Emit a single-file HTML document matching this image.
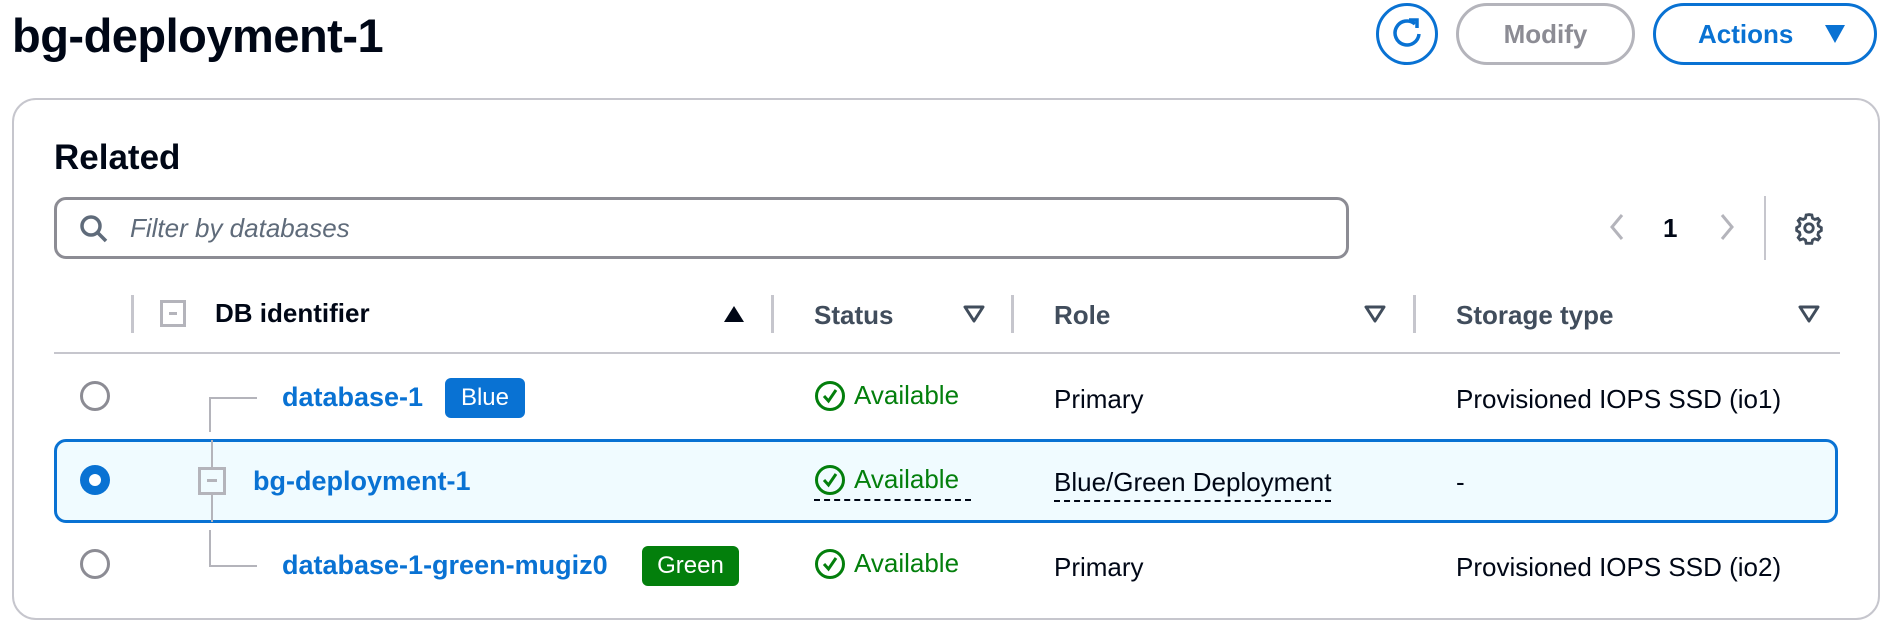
<!DOCTYPE html>
<html><head><meta charset="utf-8"><style>
*{box-sizing:border-box;margin:0;padding:0}
body{width:1894px;height:636px;background:#fff;position:relative;overflow:hidden;font-family:"Liberation Sans",sans-serif;color:#000716}
.a{position:absolute;white-space:nowrap}
.b{font-weight:bold}
.lnk{color:#0972d3;font-weight:bold;font-size:27px}
.txt{font-size:26px}
.av{color:#037f0c;font-size:26px}
.vd{position:absolute;width:3px;background:#c6c6cd}
.tri{position:absolute}
.radio{position:absolute;width:30px;height:30px;border:3px solid #8c8c94;border-radius:50%}
.tl{position:absolute;background:#b4b4bb}
.dash{border-bottom:2px dashed #000716;padding-bottom:2px}
</style></head><body>
<div class="a b" style="left:12px;top:8px;font-size:47px;letter-spacing:-0.5px">bg-deployment-1</div>

<div class="a" style="left:1376px;top:3px;width:62px;height:62px;border:3px solid #0972d3;border-radius:50%">
<svg width="56" height="56" viewBox="0 0 56 56" style="position:absolute;left:0;top:0"><path d="M36 18 A12 12 0 1 0 40 28" fill="none" stroke="#0972d3" stroke-width="3.5"/><path d="M30 14 L38 14 L38 22" fill="none" stroke="#0972d3" stroke-width="3.5"/></svg></div>
<div class="a b" style="left:1456px;top:3px;width:179px;height:62px;border:3px solid #b4b4bb;border-radius:31px;color:#8c8c94;font-size:26px;text-align:center;line-height:56px">Modify</div>
<div class="a b" style="left:1653px;top:3px;width:224px;height:62px;border:3px solid #0972d3;border-radius:31px;color:#0972d3;font-size:26px;line-height:56px;padding-left:42px">Actions<svg style="position:absolute;left:168px;top:18px" width="22" height="20"><path d="M1 1 L21 1 L11 19 Z" fill="#0972d3"/></svg></div>

<div class="a" style="left:12px;top:98px;width:1868px;height:522px;border:2px solid #c6c6cd;border-radius:24px"></div>
<div class="a b" style="left:54px;top:138px;font-size:35px">Related</div>

<div class="a" style="left:54px;top:197px;width:1295px;height:62px;border:3px solid #8c8c94;border-radius:12px"></div>
<svg class="a" style="left:78px;top:213px" width="32" height="32" viewBox="0 0 32 32"><circle cx="13" cy="13" r="9" fill="none" stroke="#5f6b7a" stroke-width="3.5"/><path d="M20 20 L28 28" stroke="#5f6b7a" stroke-width="3.5"/></svg>
<div class="a" style="left:130px;top:213px;font-size:26px;font-style:italic;color:#5f6b7a">Filter by databases</div>

<svg class="a" style="left:1604px;top:212px" width="24" height="30"><path d="M18 3 L8 15 L18 27" fill="none" stroke="#b4b4bb" stroke-width="3"/></svg>
<div class="a b" style="left:1663px;top:213px;font-size:26px">1</div>
<svg class="a" style="left:1716px;top:212px" width="24" height="30"><path d="M6 3 L16 15 L6 27" fill="none" stroke="#b4b4bb" stroke-width="3"/></svg>
<div class="vd" style="left:1764px;top:196px;height:64px;width:2px"></div>
<svg class="a" style="left:1792px;top:211px" width="34" height="34" viewBox="0 0 24 24"><path d="M12 2.5l2 .3.5 2.3 1.6.9 2.2-.8 1.3 1.6-1.3 2 .4 1.8 2 1.2v2l-2 1.2-.4 1.8 1.3 2-1.3 1.6-2.2-.8-1.6.9-.5 2.3h-4l-.5-2.3-1.6-.9-2.2.8-1.3-1.6 1.3-2-.4-1.8-2-1.2v-2l2-1.2.4-1.8-1.3-2 1.3-1.6 2.2.8 1.6-.9.5-2.3z" fill="none" stroke="#414d5c" stroke-width="2"/><circle cx="12" cy="12" r="3" fill="none" stroke="#414d5c" stroke-width="2"/></svg>

<div class="vd" style="left:131px;top:295px;height:38px"></div>
<div class="a" style="left:160px;top:300px;width:26px;height:27px;border:3px solid #b4b4bb"><div style="position:absolute;left:6px;top:9px;width:8px;height:3px;background:#b4b4bb"></div></div>
<div class="a b txt" style="left:215px;top:298px">DB identifier</div>
<svg class="tri" style="left:723px;top:305px" width="22" height="18"><path d="M11 1 L21 17 L1 17 Z" fill="#000716"/></svg>
<div class="vd" style="left:771px;top:295px;height:38px"></div>
<div class="a b txt" style="left:814px;top:300px;color:#414d5c">Status</div>
<svg class="tri" style="left:963px;top:305px" width="22" height="18"><path d="M2 2 L20 2 L11 16 Z" fill="none" stroke="#414d5c" stroke-width="3" stroke-linejoin="round"/></svg>
<div class="vd" style="left:1011px;top:295px;height:38px"></div>
<div class="a b txt" style="left:1054px;top:300px;color:#414d5c">Role</div>
<svg class="tri" style="left:1364px;top:305px" width="22" height="18"><path d="M2 2 L20 2 L11 16 Z" fill="none" stroke="#414d5c" stroke-width="3" stroke-linejoin="round"/></svg>
<div class="vd" style="left:1413px;top:295px;height:38px"></div>
<div class="a b txt" style="left:1456px;top:300px;color:#414d5c">Storage type</div>
<svg class="tri" style="left:1798px;top:305px" width="22" height="18"><path d="M2 2 L20 2 L11 16 Z" fill="none" stroke="#414d5c" stroke-width="3" stroke-linejoin="round"/></svg>
<div class="a" style="left:54px;top:352px;width:1786px;height:2px;background:#c6c6cd"></div>

<div class="a" style="left:54px;top:439px;width:1784px;height:84px;border:3px solid #0972d3;border-radius:12px;background:#f0fbff"></div>

<div class="radio" style="left:80px;top:381px"></div>
<div class="a" style="left:80px;top:465px;width:30px;height:30px;border-radius:50%;background:#0972d3"><div style="position:absolute;left:9px;top:9px;width:12px;height:12px;border-radius:50%;background:#fff"></div></div>
<div class="radio" style="left:80px;top:549px"></div>

<div class="tl" style="left:209px;top:397px;width:2px;height:35px"></div>
<div class="tl" style="left:209px;top:397px;width:48px;height:2px"></div>
<div class="tl" style="left:211px;top:440px;width:2px;height:82px"></div>
<div class="a" style="left:198px;top:467px;width:28px;height:28px;border:3px solid #b4b4bb;background:#f0fbff"><div style="position:absolute;left:6px;top:9px;width:10px;height:3px;background:#b4b4bb"></div></div>
<div class="tl" style="left:209px;top:530px;width:2px;height:37px"></div>
<div class="tl" style="left:209px;top:565px;width:48px;height:2px"></div>

<div class="a lnk" style="left:282px;top:382px">database-1</div>
<div class="a" style="left:445px;top:378px;width:80px;height:40px;background:#0972d3;border-radius:6px;color:#fff;font-size:24px;text-align:center;line-height:40px">Blue</div>
<div class="a lnk" style="left:253px;top:466px">bg-deployment-1</div>
<div class="a lnk" style="left:282px;top:550px">database-1-green-mugiz0</div>
<div class="a" style="left:642px;top:546px;width:97px;height:40px;background:#037f0c;border-radius:6px;color:#fff;font-size:24px;text-align:center;line-height:40px">Green</div>

<svg class="a" style="left:814px;top:380px" width="32" height="32" viewBox="0 0 32 32"><circle cx="16" cy="16" r="13.5" fill="none" stroke="#037f0c" stroke-width="3"/><path d="M10 16 L14.5 21 L22 10" fill="none" stroke="#037f0c" stroke-width="3"/></svg>
<div class="a av" style="left:854px;top:380px">Available</div>
<svg class="a" style="left:814px;top:464px" width="32" height="32" viewBox="0 0 32 32"><circle cx="16" cy="16" r="13.5" fill="none" stroke="#037f0c" stroke-width="3"/><path d="M10 16 L14.5 21 L22 10" fill="none" stroke="#037f0c" stroke-width="3"/></svg>
<div class="a av" style="left:854px;top:464px">Available</div>
<div class="a" style="left:814px;top:499px;width:157px;border-bottom:2px dashed #000716"></div>
<svg class="a" style="left:814px;top:548px" width="32" height="32" viewBox="0 0 32 32"><circle cx="16" cy="16" r="13.5" fill="none" stroke="#037f0c" stroke-width="3"/><path d="M10 16 L14.5 21 L22 10" fill="none" stroke="#037f0c" stroke-width="3"/></svg>
<div class="a av" style="left:854px;top:548px">Available</div>

<div class="a txt" style="left:1054px;top:384px">Primary</div>
<div class="a txt dash" style="left:1054px;top:467px">Blue/Green Deployment</div>
<div class="a txt" style="left:1054px;top:552px">Primary</div>

<div class="a txt" style="left:1456px;top:384px">Provisioned IOPS SSD (io1)</div>
<div class="a txt" style="left:1456px;top:467px">-</div>
<div class="a txt" style="left:1456px;top:552px">Provisioned IOPS SSD (io2)</div>
</body></html>
